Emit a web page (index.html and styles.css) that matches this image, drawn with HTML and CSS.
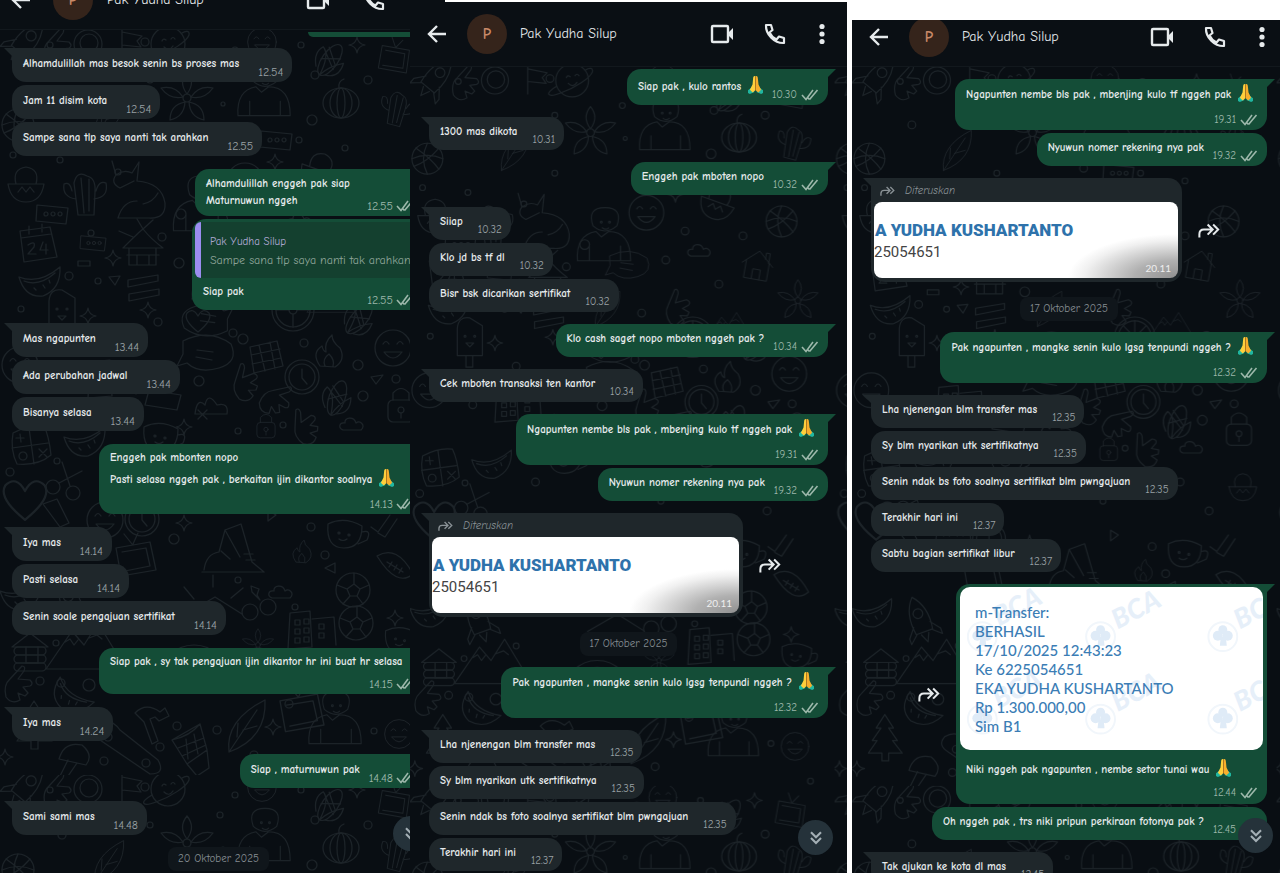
FILE: index.html
```html
<!DOCTYPE html>
<html lang="id">
<head>
<meta charset="utf-8">
<meta name="viewport" content="width=device-width, initial-scale=1">
<title>Pak Yudha Silup</title>
<link rel="stylesheet" href="styles.css">
</head>
<body>
<svg class="defs" width="0" height="0" aria-hidden="true">
  <defs>
    <symbol id="back" viewBox="0 0 24 24"><path d="M21 12H4M12 4l-8 8 8 8" fill="none" stroke="currentColor" stroke-width="2.4"/></symbol>
    <symbol id="video" viewBox="0 0 24 24"><rect x="2" y="4" width="16" height="16" rx="1" fill="none" stroke="currentColor" stroke-width="2.4"/><path d="M18 11l5-5v12l-5-5z" fill="currentColor"/></symbol>
    <symbol id="phone" viewBox="0 0 24 24"><path d="M3 3h5l1.500 5-3 2.500c1.500 3.200 4 5.600 7 7l2.500-3 5 1.500v5C11.500 21.500 2.500 12.500 3 3z" fill="none" stroke="currentColor" stroke-width="2.2" stroke-linejoin="round"/></symbol>
    <symbol id="dots" viewBox="0 0 24 24"><g fill="currentColor"><circle cx="12" cy="4.500" r="2.600"/><circle cx="12" cy="12" r="2.600"/><circle cx="12" cy="19.500" r="2.600"/></g></symbol>
    <symbol id="ticks" viewBox="0 0 18 12"><path d="M1 6l4 4.500L12 1M8.500 10.500L16.500 1M7 9l1.500 1.500" fill="none" stroke="currentColor" stroke-width="1.600"/></symbol>
    <symbol id="down" viewBox="0 0 24 24"><path d="M6 5l6 6 6-6M6 12l6 6 6-6" fill="none" stroke="currentColor" stroke-width="2.500"/></symbol>
    <symbol id="forward" viewBox="0 0 24 16"><path d="M1.500 15.500V12q0-5 5-5H15M10.500 1.500L16 7l-5.500 5.500M16.500 1.500L22 7l-5.500 5.500" fill="none" stroke="currentColor" stroke-width="2.200"/></symbol>
    <symbol id="pray" viewBox="0 0 16 20"><path d="M0 16l4-3 3 5-5 2-2-1zM16 16l-4-3-3 5 5 2 2-1z" fill="#20b6a0"/><path d="M7.800 1C6 .6 5.500 2 5.400 4L4.800 10 2 15.500 5 18.500 7.800 16z" fill="#ffcf3c"/><path d="M8.200 1c1.800-.4 2.300 1 2.400 3l.6 6 2.800 5.500-3 3L8.200 16z" fill="#f7ae2c"/><path d="M8 2v14" stroke="#b8701c" stroke-width=".8"/></symbol>
    <symbol id="logo" viewBox="0 0 32 32"><circle cx="16" cy="16" r="14.500" fill="none" stroke="#f1f6fb" stroke-width="2"/><g fill="#dfebf7"><circle cx="16" cy="9" r="4.500"/><circle cx="11" cy="15" r="5"/><circle cx="21" cy="15" r="5"/><path d="M14 16h5l1 9h-7z"/></g></symbol>

    <g id="star4"><path d="M0-8Q1-1 8 0 1 1 0 8-1 1-8 0-1-1 0-8z"/></g>
    <g id="cloud"><path d="M-9 6h18c5-5-1-10-5-7-2-7-12-6-11 0-6-1-7 5-2 7z"/></g>
    <g id="rocket"><path d="M0-26Q13-12 9 12H-9Q-13-12 0-26zM-9 4l-8 10v6l9-8M9 4l8 10v6l-9-8M-4 14l4 9 4-9"/><circle cy="-8" r="5"/></g>
    <g id="planet"><circle r="17"/><path d="M-16 6c-14 8-9 12 4 7 15-5 31-16 33-22 1-5-4-4-7-2M-6-3q1-3 4-1M3-5q2-3 4 0M-4 3q5 5 9-1"/></g>
    <g id="pumpkin"><ellipse rx="18" ry="15"/><ellipse rx="11" ry="15"/><ellipse rx="4" ry="15"/><path d="M-2-15q-1-7 5-9"/></g>
    <g id="flower"><path d="M0-4Q-9-16 0-27 9-16 0-4M4-1Q12-13 26-10 17 2 4-1M2 4Q17 7 17 22 3 19 2 4M-2 4Q-17 7-17 22-3 19-2 4M-4-1Q-12-13-26-10-17 2-4-1"/><circle r="4"/></g>
    <g id="ball"><circle r="16"/><path d="M-16 0Q0-7 16 0M0-16Q-8 0 0 16M-12-11Q4 0 12 11M-14 8Q0 3 12-11"/></g>
    <g id="house"><path d="M-20 0L0-18 20 0M-15-4v23h30V-4M-5 19V6H5v13M9-9v-8h5v13"/></g>
    <g id="fox"><path d="M-26-26l4 14q8-6 16-2l7-11-2 19q25 2 28 22 1 16-16 15h-31q5-17 19-17M-22-12q-6 8 4 13l14-7M5 17q10-2 15-11"/></g>
    <g id="cactus"><path d="M-8 22L-12-10q3-13 13-7 9 2 8 16L8 22zM-10 6Q-24 4-22-9q6-3 8 7M8 6q15-2 12-16-7-3-10 8M-5-15l3 35M3-14v32"/></g>
    <g id="smile"><circle r="18"/><path d="M-10-4q3-5 6 0M4-4q3-5 6 0M-9 4q9 12 18 0z"/></g>
    <g id="dish"><path d="M-18 0h36q-3 18-18 18T-18 0zM-10 0q-4-15 10-17 14 2 10 17M-8 8l4-5 4 5 4-5 4 5"/></g>
    <g id="card"><path d="M-16-9L15-6 13 10-17 7z"/><circle cx="-7" r="2"/><circle r="2"/><circle cx="7" r="2"/></g>
    <g id="calendar"><path d="M-18-14L12-18 19 12-14 17zM-17-7L13-11M-9-19v8M4-21v8M-10 0q8-5 6 2l-6 7h8M5-3L2 5h8M8-1v10"/></g>
    <g id="melon"><path d="M-20-4Q0 4 21-14 22 8 4 15-14 17-20-4zM-15 0Q0 6 16-8M-5 7l2 2M4 4l2 3M10-1l1 3"/></g>
    <g id="hut"><path d="M-20 0Q-4-16 0-19 8-9 20 0zM-14 0v17h27V0M-16 7h32M-6 7v10M6 7v10M-10-11L-24-17M0-19l-6-10M0-19l10-9"/></g>
    <g id="ice"><path d="M-13 13v-28Q-12-28 0-26L13-18V13zM-4 13v12h7V13"/><circle cx="-5" cy="-7" r="1"/><circle cx="5" cy="-7" r="1"/><path d="M-4 0h8l-4 4z"/></g>
    <g id="chat"><path d="M-26-13Q0-26 22-10 30 8 10 14-10 20-22 9l-10 3 6-12zM-12-4l16 2M-13 3L3 6"/></g>
    <g id="heart"><path d="M0 11Q-15-1-11-8-5-14 0-5 5-14 11-8 15-1 0 11z"/></g>
    <g id="wheel"><circle r="21"/><circle r="17"/><circle r="4"/><path d="M0-17v13M4 0h13M0 4v13M-17 0h13M-12-12l9 9M12-12l-9 9"/></g>
    <g id="gift"><path d="M-15-9L12-15 18 10-11 17zM-6-11l6 26M5-14l5 27M-14-1L15-7M-13 8L16 2"/></g>
    <g id="fire"><path d="M-9 14Q-18 1-7-6q1 5 4 6Q-5-10 3-17q0 7 8 13 6 12-5 19zM-4 14q-3-7 4-12 6 6 4 12"/></g>
    <g id="clock"><circle r="17"/><circle r="13"/><path d="M0-8v9l5 6"/></g>
    <g id="corn"><ellipse rx="8" ry="18"/><path d="M-8-4L8 6M-8 4L8-7M-8-10L7 1M-8 13Q-18 3-13-7q10 3 13 25Q3 5 13-5q5 15-8 20"/></g>
    <g id="lock"><rect x="-13" y="-8" width="26" height="22" rx="5"/><path d="M-8-8v-7Q0-24 8-15v7"/><circle cy="2" r="3"/><path d="M0 5v5"/></g>
    <g id="hand"><path d="M-12 12Q-15 0-8-6L4-19q4 0 2 5L0-6l12 1q4 4 0 6l-7 1 5 6-3 3-7-3 2 7Q-6 20-12 12z"/></g>
    <g id="calc"><path d="M-17-13Q0-22 14-20q5 10 7 29Q8 20-13 18-20 4-17-13zM-18 2L18-3M-1-18l5 36M-10-12l1 8M-14-8h8M9 3l8 8M17 3l-8 8"/><circle cx="-7" cy="10" r="4"/></g>
    <g id="scissors"><circle cx="-13" cy="8" r="7"/><circle cx="7" cy="14" r="7"/><path d="M-7 4L16-8M4 7L-4-17"/></g>
    <g id="cup"><path d="M-16-8Q0-16 18-6 18 16 0 16T-16-8zM18 0q10-3 5 8l-9 4"/><circle cx="-5" cy="1" r="1"/><circle cx="5" cy="3" r="1"/><path d="M-5 7q4 3 8 0"/></g>
    <g id="shoe"><path d="M-30 18h62M-28 16Q-26 0-13-2l6-22L9-30 20 8l12 10M-11-3l9 8M-7-24l15 27M12 0h9M14 6h9"/></g>
    <g id="football"><path d="M-18-10Q2-22 18 8 2 22-18-10zM-8-4L8 6M-3-4l-3 5M2-1l-3 5M7 2L4 7"/></g>
    <g id="cabin"><path d="M-18-8L0-22 18-8z"/><rect x="-16" y="-8" width="32" height="8" rx="4"/><rect x="-16" width="32" height="8" rx="4"/><rect x="-16" y="8" width="32" height="8" rx="4"/><path d="M-4-8V8H8V-8"/></g>
    <g id="mountain"><path d="M-38 20L-12-18 0-4 14-26 42 20zM-19-7l5-3 4 6 4-5M5-11l8-3 5 4"/></g>
    <g id="building"><path d="M-22 18L-20-18 0-20 2 16zM2-12L24-14 26 14M-15-11h5v5h-5zM-6-12h5v5h-5zM-15-2h5v5h-5zM-6-3h5v5h-5zM-15 7h5v5h-5zM-6 6h5v5h-5zM9-7h5v5H9zM9 2h5v5H9z"/></g>
    <g id="soccer"><circle r="17"/><path d="M-6-1L1-6 7-1 4 6h-7zM1-6v-11M7-1l9-4M4 6l6 8M-3 6l-7 8M-6-1l-10-4"/></g>
    <g id="rainbow"><path d="M-34 16A34 34 0 0 1 34 16M-27 16A27 27 0 0 1 27 16M-20 16A20 20 0 0 1 20 16M-38 16h76"/></g>
    <g id="hammer"><path d="M-15-9Q-4-20 10-10l5-4 4 8-10 5-4-4-5 2 8 22-6 3L-6 0z"/></g>
    <g id="board"><path d="M-32-22Q-18-30-8-16L30 14Q38 28 22 28L-28-6Q-40-13-32-22z"/><circle cx="-20" cy="-9" r="4"/><circle cx="18" cy="17" r="4"/></g>
    <g id="drum"><path d="M-18-8L10-24 17 2-3 16zM-18-8Q0-12 10-24M-12 0L14-10M-8 8L16-3M-3 16l10 12 12-8L17 2M-4-9l2 20M4-14l4 20"/></g>
    <g id="leaf"><path d="M-14 24Q-18-8 22-28 24 10-14 24zM-14 24L14-18M-6 9l1-14M0 2l14-4"/></g>
    <g id="person"><path d="M-30 24Q-32-4-10-8L-4-2 4-8Q28-8 28 24zM-13-14Q-20-34 0-34T13-14Q0-3-13-14zM-17 24V8M17 24V8"/><circle cx="-4" cy="-18" r="1"/><circle cx="5" cy="-18" r="1"/><path d="M-3-12q4 3 7 0"/></g>
    <g id="mushroom"><path d="M-15 0Q-10-18 8-14 20-4 12 6zM-6 1l-8 16 6 3L3 4"/></g>
    <g id="tree"><path d="M0-26L-9-12h5l-9 13h5l-9 13H-3v8h7v-8h14L8 1h5L4-12h5z"/></g>
    <g id="tv"><path d="M-20-12L14-18 20 10-15 16zM-14-8L10-12 14 6-11 11M-4-16l-8-10M-3-16l5-11"/></g>

    <pattern id="doodles" width="440" height="745" patternUnits="userSpaceOnUse">
      <g fill="none" stroke="#1c2328" stroke-width="1.200" stroke-linecap="round" stroke-linejoin="round">
        <use href="#rocket" transform="translate(26 12) rotate(40)"/><use href="#hand" x="57" y="17"/><circle cx="88" cy="14" r="14"/><circle cx="89" cy="13" r="9"/><path d="M122 28V-4M122 2l20 4-5 5 4 6-19-2"/><use href="#planet" x="168" y="14"/><use href="#smile" transform="translate(262 12) scale(.8)"/><use href="#corn" transform="translate(330 30) rotate(35)"/><use href="#tv" transform="translate(394 30) rotate(20) scale(.8)"/>
        <use href="#flower" x="187" y="68"/><use href="#person" transform="translate(265 64) scale(.9)"/><use href="#pumpkin" x="341" y="73"/><use href="#ball" x="18" y="95"/><use href="#cactus" transform="translate(398 78) rotate(15) scale(.8)"/><use href="#leaf" transform="translate(106 88) scale(.8)"/><use href="#card" x="277" y="110"/>
        <use href="#dish" x="26" y="154"/><use href="#cactus" x="86" y="163"/><use href="#fox" x="138" y="157"/><use href="#person" transform="translate(202 178) scale(.95)"/><use href="#smile" x="245" y="151"/><use href="#dish" transform="translate(319 140) rotate(20)"/><use href="#ball" x="385" y="160"/><use href="#card" x="53" y="184"/>
        <use href="#calendar" x="38" y="215"/><use href="#hut" x="143" y="218"/><use href="#card" transform="translate(94 213) scale(.8)"/><use href="#chat" transform="translate(228 206) scale(.8)"/><use href="#house" transform="translate(360 205) rotate(10) scale(.8)"/><use href="#cloud" x="300" y="190"/>
        <use href="#melon" x="39" y="251"/><path d="M78 231h12v5H78zM128 250l30-5v6l-30 6zM129 264l30-5v6l-30 6z"/><use href="#hand" transform="translate(277 250) rotate(-20)"/><use href="#flower" transform="translate(402 242) scale(.8)"/><use href="#leaf" transform="translate(202 252) scale(.7)"/><use href="#mountain" transform="translate(330 270) scale(.6)"/>
        <use href="#ice" x="62" y="286"/><use href="#chat" x="209" y="324"/><use href="#chat" transform="translate(204 289) rotate(180) scale(.9)"/><use href="#heart" x="198" y="291"/><use href="#wheel" x="293" y="280"/><use href="#corn" transform="translate(359 289) rotate(40)"/><use href="#smile" x="393" y="318"/><use href="#gift" x="265" y="326"/><use href="#fire" x="329" y="322"/><use href="#smile" x="20" y="335"/>
        <use href="#clock" x="302" y="347"/><use href="#hand" transform="translate(245 353) rotate(-25)"/><use href="#corn" transform="translate(337 368) rotate(20)"/><use href="#lock" x="401" y="378"/><path d="M195 384q2-17 10-9 3-14 12 0 12-3 10 9zM149 360l32 5-4 15-32-5z"/><use href="#hand" transform="translate(276 370) rotate(35)"/><use href="#building" x="110" y="350"/><use href="#cup" x="160" y="405"/>
        <use href="#calc" x="30" y="416"/><use href="#melon" x="84" y="411"/><use href="#scissors" x="66" y="449"/><use href="#hand" transform="translate(305 397) rotate(-40)"/><use href="#cloud" x="352" y="394"/><use href="#lock" transform="translate(266 398) scale(.7)"/><use href="#dish" transform="translate(405 435) scale(.8)"/><use href="#star4" x="184" y="397"/>
        <use href="#heart" transform="translate(25 470) scale(1.8)"/><path d="M43 474l14-5 12 24-9 4z"/><use href="#clock" x="142" y="489"/><use href="#smile" x="105" y="490"/><use href="#star4" x="184" y="493"/><use href="#shoe" x="232" y="524"/><use href="#cup" x="344" y="502"/><path d="M371 497l7 5 12-17M378 503l7 4 12-18"/><use href="#football" x="395" y="536"/><use href="#fire" transform="translate(302 522) scale(.7)"/>
        <use href="#tv" x="136" y="530"/><use href="#rocket" transform="translate(71 574) rotate(-20)"/><use href="#soccer" x="353" y="560"/><path d="M184 585l31-18 27 17M194 569l-10-12M213 557v-12M231 568l12-10"/><circle cx="250" cy="582" r="8"/><circle cx="268" cy="577" r="8"/><use href="#cloud" x="281" y="562"/><use href="#melon" x="20" y="565"/>
        <use href="#cabin" x="30" y="625"/><use href="#mountain" x="84" y="619"/><use href="#rainbow" x="194" y="633"/><use href="#building" x="310" y="601"/><use href="#soccer" x="356" y="593"/><use href="#cup" transform="translate(400 608) scale(.9)"/><use href="#flower" transform="translate(258 615) scale(.6)"/>
        <use href="#hand" x="18" y="655"/><use href="#melon" transform="translate(70 665) rotate(50)"/><use href="#hammer" x="150" y="692"/><use href="#board" x="128" y="716"/><use href="#drum" x="190" y="718"/><use href="#leaf" x="243" y="698"/><use href="#tv" transform="translate(302 684) scale(1.1)"/><use href="#person" transform="translate(336 692) scale(.9)"/><use href="#smile" transform="translate(399 704) scale(.8)"/><use href="#tree" x="34" y="697"/><use href="#mushroom" x="74" y="729"/>
        <use href="#star4" x="357" y="15"/><use href="#star4" x="275" y="132"/><use href="#star4" x="113" y="228"/><use href="#star4" x="88" y="286"/><use href="#star4" x="148" y="280"/><use href="#star4" x="395" y="588"/><use href="#star4" x="273" y="697"/><use href="#star4" x="5" y="727"/><path d="M371 347l12-2-7 9zM109 247l11-1-5 9zM268 480l8 5-8 6zM325 538l10-5v10zM198 380l9 9M207 380l-9 9M251 556l8 3-2 6 3 5-8-8z"/>
        <g><circle cx="50" cy="15" r="3"/><circle cx="145" cy="12" r="4"/><circle cx="220" cy="40" r="3"/><circle cx="301" cy="15" r="3"/><circle cx="223" cy="74" r="2"/><circle cx="312" cy="90" r="5"/><circle cx="299" cy="110" r="3"/><circle cx="13" cy="125" r="3"/><circle cx="60" cy="130" r="3"/><circle cx="118" cy="142" r="3"/><circle cx="181" cy="184" r="5"/><circle cx="91" cy="203" r="3"/><circle cx="162" cy="207" r="4"/><circle cx="69" cy="246" r="4"/><circle cx="179" cy="233" r="5"/><circle cx="98" cy="251" r="3"/><circle cx="21" cy="279" r="3"/><circle cx="158" cy="292" r="4"/><circle cx="233" cy="303" r="4"/><circle cx="243" cy="309" r="5"/><circle cx="304" cy="313" r="4"/><circle cx="358" cy="335" r="5"/><circle cx="199" cy="351" r="5"/><circle cx="363" cy="366" r="5"/><circle cx="396" cy="349" r="4"/><circle cx="238" cy="401" r="3"/><circle cx="283" cy="395" r="3"/><circle cx="10" cy="442" r="4"/><circle cx="57" cy="431" r="3"/><circle cx="174" cy="509" r="5"/><circle cx="325" cy="525" r="4"/><circle cx="311" cy="497" r="4"/><circle cx="238" cy="550" r="3"/><circle cx="295" cy="577" r="3"/><circle cx="56" cy="613" r="3"/><circle cx="40" cy="651" r="4"/><circle cx="61" cy="653" r="4"/><circle cx="89" cy="655" r="6"/><circle cx="177" cy="696" r="4"/><circle cx="217" cy="700" r="4"/><circle cx="160" cy="717" r="4"/><circle cx="104" cy="731" r="4"/><circle cx="289" cy="674" r="4"/><circle cx="374" cy="701" r="3"/><circle cx="254" cy="725" r="4"/><circle cx="415" cy="740" r="3"/><circle cx="235" cy="20" r="3"/><circle cx="315" cy="45" r="4"/><circle cx="368" cy="50" r="4"/><circle cx="150" cy="50" r="3"/><circle cx="62" cy="60" r="4"/><circle cx="240" cy="105" r="4"/><circle cx="345" cy="118" r="3"/><circle cx="150" cy="110" r="3"/><circle cx="285" cy="170" r="4"/><circle cx="345" cy="175" r="4"/><circle cx="265" cy="200" r="4"/><circle cx="320" cy="225" r="4"/><circle cx="240" cy="255" r="4"/><circle cx="110" cy="310" r="4"/><circle cx="65" cy="350" r="4"/><circle cx="130" cy="430" r="4"/><circle cx="220" cy="440" r="4"/><circle cx="260" cy="450" r="3"/><circle cx="340" cy="430" r="4"/><circle cx="370" cy="460" r="4"/><circle cx="110" cy="600" r="3"/><circle cx="270" cy="650" r="4"/><circle cx="370" cy="640" r="4"/><circle cx="415" cy="660" r="4"/></g>
      </g>
    </pattern>
    <pattern id="doodles-small" href="#doodles" patternTransform="scale(.965)"/>
  </defs>
</svg>

<main class="shots">
  <section class="shot shot-a" aria-label="Percakapan 1">
    <div class="phone">
      <header class="bar">
        <button class="icon" aria-label="Kembali"><svg><use href="#back"/></svg></button>
        <span class="avatar">P</span><h2>Pak Yudha Silup</h2>
        <button class="icon" aria-label="Panggilan video"><svg><use href="#video"/></svg></button>
        <button class="icon" aria-label="Telepon"><svg><use href="#phone"/></svg></button>
        <button class="icon menu" aria-label="Menu"><svg><use href="#dots"/></svg></button>
      </header>
      <div class="feed">
        <svg class="wallpaper" aria-hidden="true"><rect width="100%" height="100%" fill="url(#doodles)"/></svg>
        <div class="msg out sliver"></div>
        <div class="msg in first"><p>Alhamdulillah mas besok senin bs proses mas</p><time>12.54</time></div>
        <div class="msg in"><p>Jam 11 disim kota</p><time>12.54</time></div>
        <div class="msg in"><p>Sampe sana tlp saya nanti tak arahkan</p><time>12.55</time></div>
        <div class="msg out first two"><p>Alhamdulillah enggeh pak siap<br>Maturnuwun nggeh</p><time>12.55<svg class="ticks"><use href="#ticks"/></svg></time></div>
        <div class="msg out reply">
          <blockquote><b>Pak Yudha Silup</b><span>Sampe sana tlp saya nanti tak arahkan</span></blockquote>
          <div class="line"><p>Siap pak</p><time>12.55<svg class="ticks"><use href="#ticks"/></svg></time></div>
        </div>
        <div class="msg in first"><p>Mas ngapunten</p><time>13.44</time></div>
        <div class="msg in"><p>Ada perubahan jadwal</p><time>13.44</time></div>
        <div class="msg in"><p>Bisanya selasa</p><time>13.44</time></div>
        <div class="msg out first stack lines"><p>Enggeh pak mbonten nopo<br>Pasti selasa nggeh pak , berkaitan ijin dikantor soalnya <svg class="emoji" role="img" aria-label="🙏"><use href="#pray"/></svg></p><time>14.13<svg class="ticks"><use href="#ticks"/></svg></time></div>
        <div class="msg in first"><p>Iya mas</p><time>14.14</time></div>
        <div class="msg in"><p>Pasti selasa</p><time>14.14</time></div>
        <div class="msg in"><p>Senin soale pengajuan sertifikat</p><time>14.14</time></div>
        <div class="msg out first stack"><p>Siap pak , sy tak pengajuan ijin dikantor hr ini buat hr selasa</p><time>14.15<svg class="ticks"><use href="#ticks"/></svg></time></div>
        <div class="msg in first"><p>Iya mas</p><time>14.24</time></div>
        <div class="msg out first"><p>Siap , maturnuwun pak</p><time>14.48<svg class="ticks"><use href="#ticks"/></svg></time></div>
        <div class="msg in first"><p>Sami sami mas</p><time>14.48</time></div>
        <div class="date">20 Oktober 2025</div>
      </div>
      <button class="jump" aria-label="Ke pesan terbaru"><svg><use href="#down"/></svg></button>
    </div>
  </section>

  <section class="shot shot-b" aria-label="Percakapan 2">
    <div class="phone">
      <header class="bar">
        <button class="icon" aria-label="Kembali"><svg><use href="#back"/></svg></button>
        <span class="avatar">P</span><h2>Pak Yudha Silup</h2>
        <button class="icon" aria-label="Panggilan video"><svg><use href="#video"/></svg></button>
        <button class="icon" aria-label="Telepon"><svg><use href="#phone"/></svg></button>
        <button class="icon menu" aria-label="Menu"><svg><use href="#dots"/></svg></button>
      </header>
      <div class="feed">
        <svg class="wallpaper" aria-hidden="true"><rect width="100%" height="100%" fill="url(#doodles-small)"/></svg>
        <div class="msg out first tall"><p>Siap pak , kulo rantos <svg class="emoji" role="img" aria-label="🙏"><use href="#pray"/></svg></p><time>10.30<svg class="ticks"><use href="#ticks"/></svg></time></div>
        <div class="msg in first"><p>1300 mas dikota</p><time>10.31</time></div>
        <div class="msg out first"><p>Enggeh pak mboten nopo</p><time>10.32<svg class="ticks"><use href="#ticks"/></svg></time></div>
        <div class="msg in first"><p>Siiap</p><time>10.32</time></div>
        <div class="msg in"><p>Klo jd bs tf dl</p><time>10.32</time></div>
        <div class="msg in"><p>Bisr bsk dicarikan sertifikat</p><time>10.32</time></div>
        <div class="msg out first"><p>Klo cash saget nopo mboten nggeh pak ?</p><time>10.34<svg class="ticks"><use href="#ticks"/></svg></time></div>
        <div class="msg in first"><p>Cek mboten transaksi ten kantor</p><time>10.34</time></div>
        <div class="msg out first stack"><p>Ngapunten nembe bls pak , mbenjing kulo tf nggeh pak <svg class="emoji" role="img" aria-label="🙏"><use href="#pray"/></svg></p><time>19.31<svg class="ticks"><use href="#ticks"/></svg></time></div>
        <div class="msg out"><p>Nyuwun nomer rekening nya pak</p><time>19.32<svg class="ticks"><use href="#ticks"/></svg></time></div>
        <div class="row">
          <div class="msg in first photo">
            <div class="tag"><svg><use href="#forward"/></svg><i>Diteruskan</i></div>
            <div class="slip"><strong>A YUDHA KUSHARTANTO</strong><span>25054651</span><time>20.11</time></div>
          </div>
          <button class="share" aria-label="Teruskan"><svg><use href="#forward"/></svg></button>
        </div>
        <div class="date">17 Oktober 2025</div>
        <div class="msg out first stack"><p>Pak ngapunten , mangke senin kulo lgsg tenpundi nggeh ? <svg class="emoji" role="img" aria-label="🙏"><use href="#pray"/></svg></p><time>12.32<svg class="ticks"><use href="#ticks"/></svg></time></div>
        <div class="msg in first"><p>Lha njenengan blm transfer mas</p><time>12.35</time></div>
        <div class="msg in"><p>Sy blm nyarikan utk sertifikatnya</p><time>12.35</time></div>
        <div class="msg in"><p>Senin ndak bs foto soalnya sertifikat blm pwngajuan</p><time>12.35</time></div>
        <div class="msg in"><p>Terakhir hari ini</p><time>12.37</time></div>
      </div>
      <button class="jump" aria-label="Ke pesan terbaru"><svg><use href="#down"/></svg></button>
    </div>
  </section>

  <section class="shot shot-c" aria-label="Percakapan 3">
    <div class="phone">
      <header class="bar">
        <button class="icon" aria-label="Kembali"><svg><use href="#back"/></svg></button>
        <span class="avatar">P</span><h2>Pak Yudha Silup</h2>
        <button class="icon" aria-label="Panggilan video"><svg><use href="#video"/></svg></button>
        <button class="icon" aria-label="Telepon"><svg><use href="#phone"/></svg></button>
        <button class="icon menu" aria-label="Menu"><svg><use href="#dots"/></svg></button>
      </header>
      <div class="feed">
        <svg class="wallpaper" aria-hidden="true"><rect width="100%" height="100%" fill="url(#doodles-small)"/></svg>
        <div class="msg out first stack"><p>Ngapunten nembe bls pak , mbenjing kulo tf nggeh pak <svg class="emoji" role="img" aria-label="🙏"><use href="#pray"/></svg></p><time>19.31<svg class="ticks"><use href="#ticks"/></svg></time></div>
        <div class="msg out"><p>Nyuwun nomer rekening nya pak</p><time>19.32<svg class="ticks"><use href="#ticks"/></svg></time></div>
        <div class="row">
          <div class="msg in first photo">
            <div class="tag"><svg><use href="#forward"/></svg><i>Diteruskan</i></div>
            <div class="slip"><strong>A YUDHA KUSHARTANTO</strong><span>25054651</span><time>20.11</time></div>
          </div>
          <button class="share" aria-label="Teruskan"><svg><use href="#forward"/></svg></button>
        </div>
        <div class="date">17 Oktober 2025</div>
        <div class="msg out first stack"><p>Pak ngapunten , mangke senin kulo lgsg tenpundi nggeh ? <svg class="emoji" role="img" aria-label="🙏"><use href="#pray"/></svg></p><time>12.32<svg class="ticks"><use href="#ticks"/></svg></time></div>
        <div class="msg in first"><p>Lha njenengan blm transfer mas</p><time>12.35</time></div>
        <div class="msg in"><p>Sy blm nyarikan utk sertifikatnya</p><time>12.35</time></div>
        <div class="msg in"><p>Senin ndak bs foto soalnya sertifikat blm pwngajuan</p><time>12.35</time></div>
        <div class="msg in"><p>Terakhir hari ini</p><time>12.37</time></div>
        <div class="msg in"><p>Sabtu bagian sertifikat libur</p><time>12.37</time></div>
        <div class="row row-out">
          <button class="share" aria-label="Teruskan"><svg><use href="#forward"/></svg></button>
          <div class="msg out first receipt">
            <div class="paper">
              <svg class="marks" viewBox="0 0 304 164" aria-hidden="true">
                <g class="mark" transform="translate(30 49)"><use href="#logo" x="-24" y="-15" width="32" height="32"/><text x="12" y="-4" transform="rotate(-28)">BCA</text></g>
                <g class="mark" transform="translate(155 49)"><use href="#logo" x="-30" y="-15" width="32" height="32"/><text x="6" y="-4" transform="rotate(-28)">BCA</text></g>
                <g class="mark" transform="translate(278 49)"><use href="#logo" x="-30" y="-15" width="32" height="32"/><text x="6" y="-4" transform="rotate(-28)">BCA</text></g>
                <g class="mark" transform="translate(30 132)"><use href="#logo" x="-24" y="-15" width="32" height="32"/><text x="12" y="-4" transform="rotate(-28)">BCA</text></g>
                <g class="mark" transform="translate(155 132)"><use href="#logo" x="-30" y="-15" width="32" height="32"/><text x="6" y="-4" transform="rotate(-28)">BCA</text></g>
                <g class="mark" transform="translate(278 132)"><use href="#logo" x="-30" y="-15" width="32" height="32"/><text x="6" y="-4" transform="rotate(-28)">BCA</text></g>
              </svg>
              <p>m-Transfer:<br>BERHASIL<br>17/10/2025 12:43:23<br>Ke 6225054651<br>EKA YUDHA KUSHARTANTO<br>Rp 1.300.000,00<br>Sim B1</p>
            </div>
            <div class="caption"><p>Niki nggeh pak ngapunten , nembe setor tunai wau <svg class="emoji" role="img" aria-label="🙏"><use href="#pray"/></svg></p><time>12.44<svg class="ticks"><use href="#ticks"/></svg></time></div>
          </div>
        </div>
        <div class="msg out"><p>Oh nggeh pak , trs niki pripun perkiraan fotonya pak ?</p><time>12.45<svg class="ticks"><use href="#ticks"/></svg></time></div>
        <div class="msg in first"><p>Tak ajukan ke kota dl mas</p><time>12.45</time></div>
      </div>
      <button class="jump" aria-label="Ke pesan terbaru"><svg><use href="#down"/></svg></button>
    </div>
  </section>
</main>
</body>
</html>
```
FILE: styles.css
```css
* { box-sizing: border-box; }
body {
  margin: 0;
  background: #fff;
  color: #e6eaec;
  font: 700 11px/18px "Comic Neue", "Comic Sans MS", Lato, sans-serif;
}
p, h2, blockquote { margin: 0; }
button { padding: 0; border: 0; background: none; color: inherit; font: inherit; }
svg { display: block; }
.defs { position: absolute; }

.shots {
  display: grid;
  grid-template-columns: 410fr 437fr 433fr;
  height: 100vh;
  overflow: hidden;
}
.shot { min-width: 0; min-height: 0; display: flex; flex-direction: column; }
.shot-b { padding-top: 2px; background: linear-gradient(90deg, #0a0f14 35px, #fff 35px); }
.shot-c { padding: 20px 0 0 5px; }
.phone {
  position: relative;
  flex: 1;
  min-height: 0;
  display: flex;
  flex-direction: column;
  overflow: hidden;
  background: #090e13;
}

.bar {
  flex: none;
  display: flex;
  align-items: center;
  height: 65px;
  padding: 0 13px 0 15px;
  border-bottom: 1px solid #12181d;
  background: #0a0f14;
}
.icon svg { width: 24px; height: 24px; }
.icon + .icon { margin-left: 29px; }
.icon.menu { margin-left: 23px; }
.avatar {
  width: 40px;
  height: 40px;
  margin: 0 13px 0 18px;
  border-radius: 50%;
  background: #35241b;
  color: #c98a68;
  font-size: 15px;
  line-height: 40px;
  text-align: center;
}
.bar h2 { flex: 1; font-size: 14px; font-weight: 400; white-space: nowrap; }
.shot-a .bar { width: 445px; height: 60px; margin-top: -30px; padding: 0 12px 0 9px; }
.shot-a .avatar { margin: 0 14px 0 20px; }
.shot-a .icon + .icon { margin-left: 32px; }
.shot-a .bar .menu { margin-left: 23px; }
.shot-c .bar { height: 60px; margin-top: -13px; padding: 0 6px 0 15px; }

.feed {
  position: relative;
  flex: 1;
  display: flex;
  flex-direction: column;
  align-items: flex-start;
  gap: 3px;
  padding: 2px 19px 0;
}
.shot-a .feed { width: 439px; padding: 2px 14px 0 12px; }
.shot-c .feed { padding: 12px 13px 0 19px; }
.wallpaper { position: absolute; inset: 0; width: 100%; height: 100%; }

.msg {
  position: relative;
  flex: none;
  display: flex;
  align-items: flex-end;
  gap: 15px;
  min-height: 33px;
  padding: 4px 9px 2px 11px;
  border-radius: 14px;
  background: #1f272b;
  white-space: nowrap;
}
.msg p { padding-bottom: 7px; }
.shot-a .msg { min-height: 34px; }
.shot-a .in { gap: 19px; }
.out { align-self: flex-end; gap: 9px; background: #144d37; }
.first { margin-top: 9px; }
.shot-a .first { margin-top: 10px; }
.feed > .wallpaper + .first { margin-top: 0; }
.in.first { border-top-left-radius: 0; }
.out.first { border-top-right-radius: 0; }
.first::before {
  content: "";
  position: absolute;
  top: 0;
  left: -8px;
  width: 9px;
  height: 9px;
  background: #1f272b;
  clip-path: polygon(0 0, 100% 0, 100% 100%);
}
.out.first::before {
  right: -8px;
  left: auto;
  background: #144d37;
  clip-path: polygon(0 0, 100% 0, 0 100%);
}
time {
  display: flex;
  align-items: center;
  gap: 4px;
  color: #99a1a5;
  font-size: 11px;
  font-weight: 400;
  line-height: 16px;
}
.shot-a time { font-size: 12px; }
.shot-a .out time { gap: 3px; padding-right: 2px; }
.out time { color: #9db8ab; }
.ticks { width: 18px; height: 12px; }
.emoji { display: inline-block; width: 15px; height: 19px; margin-left: 3px; vertical-align: -4px; }
.tall { min-height: 36px; }
.stack { flex-direction: column; align-items: flex-end; gap: 2px; }
.stack p { align-self: flex-start; padding: 0; line-height: 20px; }
.stack time { margin-top: auto; }
.stack .emoji { margin-right: 5px; }
.stack { min-height: 51px; }
.shot-a .stack { min-width: 326px; min-height: 46px; }
.shot-a .lines { min-height: 70px; }
.two p { padding-bottom: 5px; line-height: 17px; }
.shot-a .two { width: 230px; min-height: 47px; justify-content: space-between; }
.sliver { width: 117px; height: 5px; margin-bottom: -2px; border-radius: 0 0 14px 14px; }
.shot-a .sliver.msg { min-height: 5px; padding: 0; }

.reply { flex-direction: column; align-items: stretch; gap: 5px; width: 233px; padding: 3px 9px 2px 3px; }
.reply blockquote {
  display: flex;
  flex-direction: column;
  height: 56px;
  padding: 11px 0 0 9px;
  border-left: 6px solid #9b8df0;
  border-radius: 6px;
  background: #14402f;
  overflow: hidden;
}
.reply b { color: #b3abd8; font-size: 11px; font-weight: 400; }
.reply span { color: #8fa59a; font-size: 12px; font-weight: 400; }
.line { display: flex; align-items: flex-end; justify-content: space-between; padding-left: 8px; }

.date {
  position: relative;
  align-self: center;
  margin: 12px 0 -1px;
  padding: 3px 10px;
  border-radius: 8px;
  background: #10161b;
  color: #858d92;
  font-size: 11px;
  font-weight: 400;
}
.shot-a .date { margin-top: 9px; }

.row { display: flex; align-items: center; gap: 15px; margin-top: 9px; }
.row .first { margin-top: 0; }
.share {
  position: relative;
  display: grid;
  place-items: center;
  width: 24px;
  height: 24px;
}
.share svg { width: 22px; height: 15px; }
.row-out { align-self: flex-end; }
.photo { display: block; width: 314px; padding: 2px 4px 4px 3px; }
.tag { display: flex; align-items: center; gap: 10px; height: 22px; padding-left: 6px; color: #8a9296; font-size: 11px; font-weight: 400; }
.tag svg { width: 15px; height: 10px; }
.slip {
  position: relative;
  display: flex;
  flex-direction: column;
  height: 76px;
  padding-top: 17px;
  border-radius: 8px;
  background: radial-gradient(ellipse 110px 44px at 100% 100%, #909090 0, #b0b0b0 40%, #f0f0f0 85%, #fff 100%) #fff;
  font-family: Roboto, sans-serif;
  overflow: hidden;
}
.slip strong { padding-left: 1px; color: #2e72ab; font-size: 17px; line-height: 22px; }
.slip span { color: #444; font-size: 15px; font-weight: 400; line-height: 22px; }
.slip time { position: absolute; right: 7px; bottom: 2px; color: #eee; font-size: 10px; font-family: Lato, sans-serif; }
.shot-c .photo { width: 311px; }

.receipt { display: block; width: 311px; padding: 3px 4px; }
.paper { position: relative; height: 163px; padding: 16px 15px; border-radius: 10px; background: #fff; overflow: hidden; }
.marks { position: absolute; inset: 0; width: 100%; height: 100%; }
.mark text { fill: #e6eff9; font: 900 italic 27px Lato, sans-serif; }
.paper p { position: relative; padding: 0; color: #3b7db5; font: 500 15px/19px Lato, sans-serif; }
.caption { display: flex; flex-direction: column; align-items: flex-end; gap: 6px; padding: 8px 5px 0 6px; }
.caption p { align-self: flex-start; padding: 0; }

.jump {
  position: absolute;
  right: 14px;
  bottom: 18px;
  display: grid;
  place-items: center;
  width: 35px;
  height: 35px;
  border-radius: 50%;
  background: #25323a;
  color: #a4afb5;
}
.jump svg { width: 20px; height: 20px; }
.shot-a .jump { right: -18px; bottom: 22px; }
.shot-c .jump { right: 7px; bottom: 20px; }
```
